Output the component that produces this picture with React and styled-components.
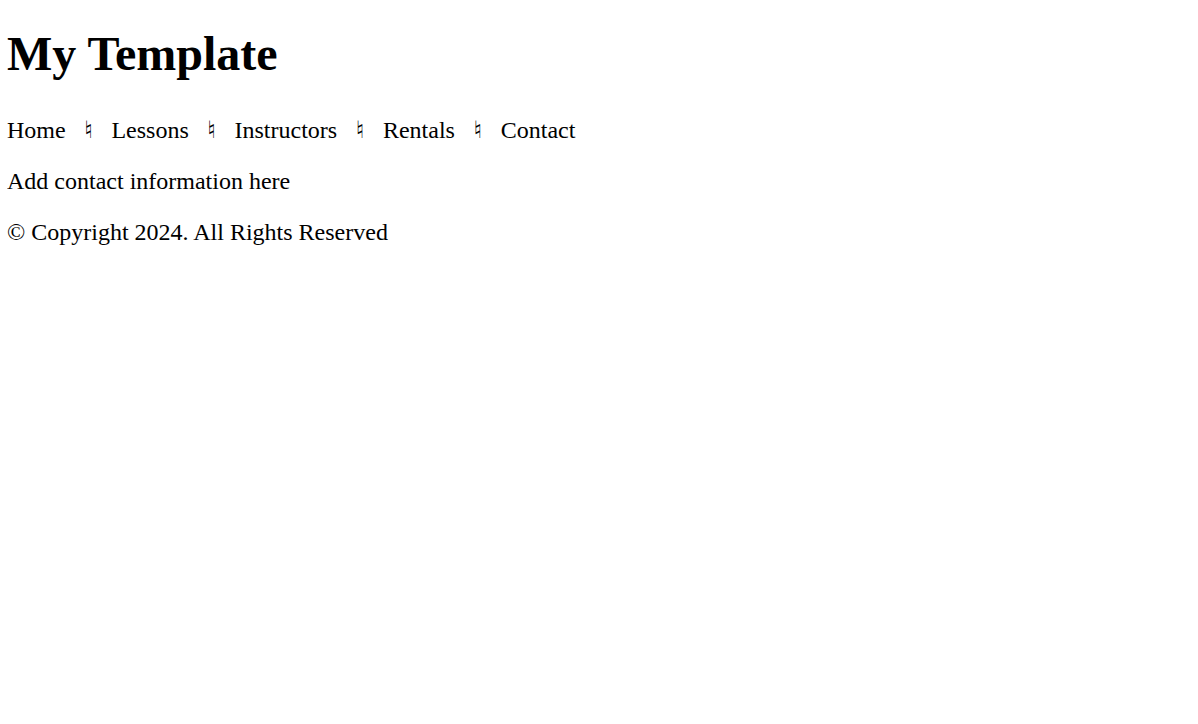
import styled, { createGlobalStyle } from 'styled-components';

const GlobalStyle = createGlobalStyle`
	body {
		margin: 8px 7px;
		background: #fff;
		color: #000;
		font-family: "Liberation Serif", "Times New Roman", serif;
		font-size: 24px;
	}
`;

const Header = styled.header``;

const Title = styled.h1`
	font-size: 48px;
	font-weight: bold;
	margin: 18px 0 36px;
`;

const Nav = styled.nav`
	display: flex;
	align-items: baseline;
	gap: 18.6px;
	margin: 0 0 24px;
`;

const NavLink = styled.a`
	color: #000;
	text-decoration: none;
	cursor: pointer;
`;

const Separator = styled.span`
	font-family: "DejaVu Sans", sans-serif;
	font-size: 24px;
	line-height: 1;
`;

const Paragraph = styled.p`
	margin: 0 0 24px;
`;

const links = ['Home', 'Lessons', 'Instructors', 'Rentals', 'Contact'];

const App = () => (
	<>
		<GlobalStyle />
		<Header>
			<Title>My Template</Title>
			<Nav>
				{links.flatMap((label, i) => [
					i > 0 && <Separator key={`sep-${label}`}>♮</Separator>,
					<NavLink key={label}>{label}</NavLink>,
				])}
			</Nav>
		</Header>
		<Paragraph>Add contact information here</Paragraph>
		<Paragraph>© Copyright 2024. All Rights Reserved</Paragraph>
	</>
);

export default App;
